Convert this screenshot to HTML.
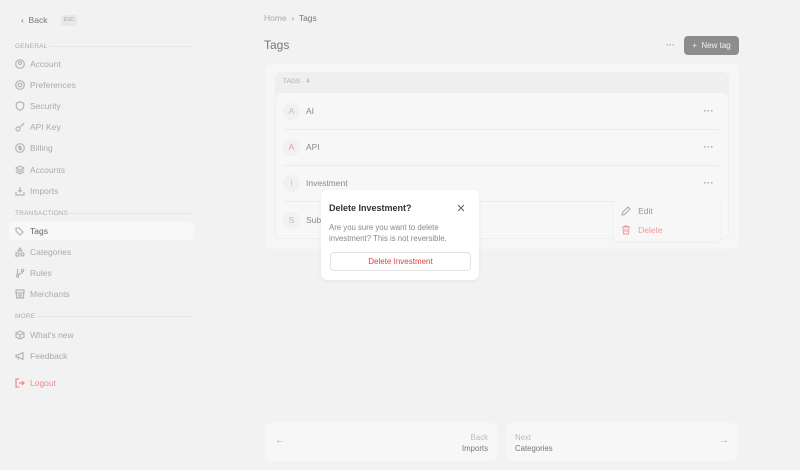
<!DOCTYPE html>
<html><head><meta charset="utf-8"><style>
*{box-sizing:border-box;margin:0;padding:0}
body{width:800px;height:470px;background:#f2f2f2;font-family:"Liberation Sans",sans-serif;position:relative;overflow:hidden;color:#333}
.a{position:absolute;white-space:nowrap}
.si{position:absolute;left:15px;font-size:8.5px;color:#aaa;display:flex;align-items:center;height:12px}
.si svg{width:10px;height:10px;margin-right:5px;stroke:#b5b5b5;fill:none;stroke-width:1.2}
.lbl{position:absolute;left:15px;font-size:6.5px;color:#aaa;letter-spacing:.2px}
.line{position:absolute;height:1px;background:#e6e6e6;right:606px}
.row{position:absolute;left:283px;width:436px;height:18px;font-size:8.5px;color:#888;display:flex;align-items:center}
.av{width:17px;height:17px;border-radius:50%;background:#f1f1f1;color:#bbb;font-size:8.5px;display:flex;align-items:center;justify-content:center;margin-right:6px}
.dots{position:absolute;right:5px;top:4px;font-size:9px;color:#999;letter-spacing:0.5px;line-height:10px;font-weight:bold}
.sep{position:absolute;left:283px;width:436px;height:1px;background:#ececec}
</style></head><body>
<div class="a" style="left:21px;top:15px;font-size:8.5px;color:#777">&#8249;&nbsp; Back</div>
<div class="a" style="left:61px;top:15px;width:16px;height:11px;background:#e8e8e8;border-radius:2px;font-size:5px;color:#aaa;text-align:center;line-height:11px">ESC</div>
<div class="lbl" style="top:43px">GENERAL</div><div class="line" style="left:49px;top:46px"></div>
<div class="si" style="top:58px"><svg viewBox="0 0 10 10"><circle cx="5" cy="5" r="4.3"/><circle cx="5" cy="4" r="1.5"/></svg>Account</div>
<div class="si" style="top:79px"><svg viewBox="0 0 10 10"><circle cx="5" cy="5" r="4.3"/><circle cx="5" cy="5" r="1.8"/></svg>Preferences</div>
<div class="si" style="top:100px"><svg viewBox="0 0 10 10"><path d="M5 .8L8.7 2.2V5C8.7 7 7 8.5 5 9.2 3 8.5 1.3 7 1.3 5V2.2Z"/></svg>Security</div>
<div class="si" style="top:121px"><svg viewBox="0 0 10 10"><circle cx="3" cy="7" r="2"/><path d="M4.5 5.5L9 1M7.5 2.5L8.5 3.5"/></svg>API Key</div>
<div class="si" style="top:142px"><svg viewBox="0 0 10 10"><circle cx="5" cy="5" r="4.3"/><path d="M6.3 3.5H4.3a.8.8 0 000 1.6h1.4a.8.8 0 010 1.6H3.7M5 2.5v5"/></svg>Billing</div>
<div class="si" style="top:164px"><svg viewBox="0 0 10 10"><path d="M5 1L9 3 5 5 1 3ZM1 5l4 2 4-2M1 7l4 2 4-2"/></svg>Accounts</div>
<div class="si" style="top:185px"><svg viewBox="0 0 10 10"><path d="M5 1v5M3 4l2 2 2-2M1 6v3h8V6"/></svg>Imports</div>
<div class="lbl" style="top:210px">TRANSACTIONS</div><div class="line" style="left:67px;top:213px"></div>
<div class="a" style="left:9px;top:222px;width:185px;height:18px;background:#f8f8f8;border-radius:4px"></div>
<div class="si" style="top:225px;color:#666"><svg viewBox="0 0 10 10"><path d="M1 2v3l4 4 3-3-4-4Z"/></svg>Tags</div>
<div class="si" style="top:246px"><svg viewBox="0 0 10 10"><path d="M5 1L7 4H3Z"/><rect x="1" y="6" width="3" height="3"/><circle cx="7.5" cy="7.5" r="1.5"/></svg>Categories</div>
<div class="si" style="top:267px"><svg viewBox="0 0 10 10"><circle cx="2.5" cy="8" r="1.2"/><circle cx="7.5" cy="2.5" r="1.2"/><path d="M2.5 1v6M7.5 4c0 2-5 2-5 3"/></svg>Rules</div>
<div class="si" style="top:288px"><svg viewBox="0 0 10 10"><path d="M1 1h8v3H1ZM1.5 4v5h7V4M4 9V6h2v3"/></svg>Merchants</div>
<div class="lbl" style="top:313px">MORE</div><div class="line" style="left:38px;top:316px"></div>
<div class="si" style="top:329px"><svg viewBox="0 0 10 10"><path d="M5 1l4 2v4L5 9 1 7V3ZM1 3l4 2 4-2M5 5v4"/></svg>What's new</div>
<div class="si" style="top:350px"><svg viewBox="0 0 10 10"><path d="M1 4h2l5-2.5v7L3 6H1ZM3 6l.5 2.5"/></svg>Feedback</div>
<div class="si" style="top:377px;color:#f08a8a"><svg viewBox="0 0 10 10" style="stroke:#f08a8a"><path d="M4 1H1v8h3M4 5h5M7 3l2 2-2 2"/></svg>Logout</div>

<div class="a" style="left:264px;top:13px;font-size:8.5px;color:#aaa">Home &nbsp;<span style="color:#999">&#8250;</span>&nbsp; <span style="color:#777">Tags</span></div>
<div class="a" style="left:264px;top:38px;font-size:12px;color:#777">Tags</div>
<div class="a" style="left:666px;top:40px;font-size:9px;color:#aaa;font-weight:bold">···</div>
<div class="a" style="left:684px;top:36px;width:55px;height:19px;background:#8d8d8d;border-radius:4px;color:#f2f2f2;font-size:8px;line-height:19px;text-align:center">+&nbsp; New tag</div>

<div class="a" style="left:265px;top:64px;width:474px;height:185px;background:#f6f6f6;border-radius:7px"></div>
<div class="a" style="left:275px;top:72px;width:454px;height:167px;background:#efefef;border-radius:6px"></div>
<div class="a" style="left:283px;top:78px;font-size:6.5px;color:#aaa">TAGS · 4</div>
<div class="a" style="left:276px;top:93px;width:452px;height:145px;background:#f7f7f7;border-radius:5px"></div>
<div class="row" style="top:102px"><div class="av">A</div>AI<div class="dots">···</div></div>
<div class="sep" style="top:129px"></div>
<div class="row" style="top:138px"><div class="av" style="color:#f29a9a">A</div>API<div class="dots">···</div></div>
<div class="sep" style="top:165px"></div>
<div class="row" style="top:174px"><div class="av" style="color:#f5b5b5">I</div>Investment<div class="dots">···</div></div>
<div class="sep" style="top:201px"></div>
<div class="row" style="top:211px"><div class="av">S</div>Subscriptions</div>

<div class="a" style="left:614px;top:200px;width:106px;height:41px;background:#f7f7f7;border-radius:4px;box-shadow:0 1px 3px rgba(0,0,0,.05)"></div>
<div class="a" style="left:621px;top:206px;font-size:8.5px;color:#999;display:flex;align-items:center"><svg width="10" height="10" viewBox="0 0 10 10" fill="none" stroke="#aaa" stroke-width="1"><path d="M1 9l.5-2.5L7 1l2 2-5.5 5.5Z"/></svg>&nbsp;&nbsp;&nbsp;Edit</div>
<div class="a" style="left:621px;top:225px;font-size:8.5px;color:#f29a9a;display:flex;align-items:center"><svg width="10" height="10" viewBox="0 0 10 10" fill="none" stroke="#f29a9a" stroke-width="1"><path d="M1 2h8M3.5 2V1h3v1M2 2l.5 7h5L8 2M4 4v3M6 4v3"/></svg>&nbsp;&nbsp;&nbsp;Delete</div>

<div class="a" style="left:321px;top:190px;width:158px;height:90px;background:#fff;border-radius:6px;box-shadow:0 1px 4px rgba(0,0,0,.06)"></div>
<div class="a" style="left:329px;top:203px;font-size:9px;font-weight:bold;color:#333">Delete Investment?</div>
<svg class="a" style="left:457px;top:204px" width="8" height="8" viewBox="0 0 8 8" stroke="#666" stroke-width="1.1"><path d="M1 1l6 6M7 1L1 7"/></svg>
<div class="a" style="left:329px;top:222px;font-size:7.8px;color:#888;line-height:11px">Are you sure you want to delete<br>investment? This is not reversible.</div>
<div class="a" style="left:330px;top:252px;width:141px;height:19px;border:1px solid #e3e3e3;border-radius:4px;color:#e83b3b;font-size:8px;text-align:center;line-height:17px">Delete Investment</div>

<div class="a" style="left:265px;top:423px;width:232px;height:38px;background:#f7f7f7;border-radius:5px"></div>
<div class="a" style="left:275px;top:435px;font-size:10px;color:#aaa">&#8592;</div>
<div class="a" style="left:400px;top:432px;width:88px;text-align:right;font-size:7.8px;color:#bbb;line-height:11px">Back<br><span style="color:#777">Imports</span></div>
<div class="a" style="left:506px;top:423px;width:232px;height:38px;background:#f7f7f7;border-radius:5px"></div>
<div class="a" style="left:515px;top:432px;font-size:7.8px;color:#bbb;line-height:11px">Next<br><span style="color:#777">Categories</span></div>
<div class="a" style="left:719px;top:435px;font-size:10px;color:#aaa">&#8594;</div>
</body></html>
